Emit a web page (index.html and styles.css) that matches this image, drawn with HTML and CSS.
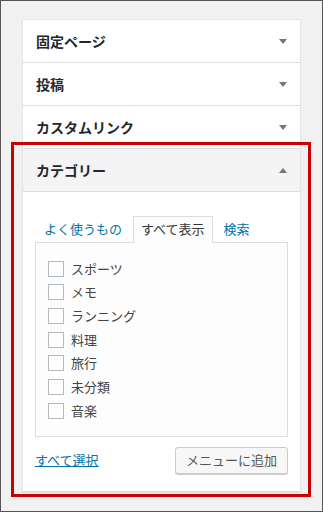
FILE: index.html
```html
<!DOCTYPE html>
<html lang="ja">
<head>
<meta charset="UTF-8">
<meta name="viewport" content="width=device-width, initial-scale=1.0">
<title>メニュー項目を追加</title>
<link rel="stylesheet" href="styles.css">
</head>
<body>
    <div class="frame">
        <div class="panel">
            <div class="section">
                <h3 class="section-title">固定ページ <span class="arrow down"></span></h3>
            </div>
            <div class="section">
                <h3 class="section-title">投稿 <span class="arrow down"></span></h3>
            </div>
            <div class="section">
                <h3 class="section-title">カスタムリンク <span class="arrow down"></span></h3>
            </div>
            <div class="section open">
                <h3 class="section-title">カテゴリー <span class="arrow up"></span></h3>
                <div class="section-body">
                    <ul class="tabs">
                        <li class="tab"><a href="#">よく使うもの</a></li>
                        <li class="tab active"><span>すべて表示</span></li>
                        <li class="tab"><a href="#">検索</a></li>
                    </ul>
                    <ul class="checklist">
                        <li><label><input type="checkbox"> スポーツ</label></li>
                        <li><label><input type="checkbox"> メモ</label></li>
                        <li><label><input type="checkbox"> ランニング</label></li>
                        <li><label><input type="checkbox"> 料理</label></li>
                        <li><label><input type="checkbox"> 旅行</label></li>
                        <li><label><input type="checkbox"> 未分類</label></li>
                        <li><label><input type="checkbox"> 音楽</label></li>
                    </ul>
                    <div class="actions">
                        <a href="#" class="select-all">すべて選択</a>
                        <button class="button">メニューに追加</button>
                    </div>
                </div>
            </div>
        </div>
        <div class="highlight"></div>
    </div>
</body>
</html>
```

FILE: styles.css
```css
*{
    box-sizing: border-box;
}
body{
    margin: 0;
    background-color: #f1f1f1;
    font-family: "Noto Sans CJK JP", "Noto Sans", sans-serif;
    font-size: 13px;
    color: #32373c;
}
.frame{
    position: relative;
    width: 323px;
    height: 512px;
    border: 1px solid #555;
    padding: 18px 21px 0 21px;
}
.panel{
    width: 279px;
    background-color: #fff;
    border: 1px solid #e5e5e5;
    border-bottom: none;
    box-shadow: 0 1px 1px rgba(0, 0, 0, 0.06);
}
.section{
    border-bottom: 1px solid #ddd;
}
.section-title{
    display: flex;
    justify-content: space-between;
    align-items: center;
    height: 42px;
    margin: 0;
    padding: 0 13px 0 13px;
    font-size: 14px;
    font-weight: bold;
    color: #23282d;
    line-height: 20px;
}
.open .section-title{
    background-color: #f4f4f4;
    border-bottom: 1px solid #ddd;
    height: 43px;
}
.arrow{
    width: 0;
    height: 0;
    border-left: 4px solid transparent;
    border-right: 4px solid transparent;
}
.arrow.down{
    border-top: 5px solid #72777c;
}
.arrow.up{
    border-bottom: 5px solid #72777c;
}
.section-body{
    padding: 24px 12px 17px 12px;
}
.tabs{
    display: flex;
    list-style: none;
    margin: 0 0 0 1px;
    padding: 0;
    gap: 3px;
    position: relative;
    z-index: 1;
}
.tab{
    border: 1px solid transparent;
    border-bottom: none;
    padding: 3px 7px 4px 7px;
    line-height: 18px;
}
.tab a{
    color: #0073aa;
    text-decoration: none;
}
.tab.active{
    border-color: #ddd;
    background-color: #fdfdfd;
    margin-bottom: -1px;
    color: #32373c;
}
.checklist{
    list-style: none;
    margin: 0;
    padding: 14px 12px 13px 12px;
    border: 1px solid #ddd;
    background-color: #fdfdfd;
}
.checklist li{
    height: 23.67px;
    display: flex;
    align-items: center;
}
.checklist label{
    display: flex;
    align-items: center;
    line-height: 18px;
    color: #444;
}
.checklist input{
    appearance: none;
    width: 16px;
    height: 16px;
    margin: 0 7px 0 0;
    border: 1px solid #b4b9be;
    background-color: #fff;
}
.actions{
    display: flex;
    justify-content: space-between;
    align-items: center;
    margin-top: 10px;
}
.select-all{
    color: #0073aa;
    text-decoration: underline;
    line-height: 18px;
}
.button{
    font-family: inherit;
    font-size: 13px;
    color: #555;
    background-color: #f7f7f7;
    border: 1px solid #ccc;
    border-radius: 3px;
    box-shadow: 0 1px 0 #ccc;
    height: 27px;
    width: 113px;
    padding: 0 10px;
    line-height: 18px;
}
.highlight{
    position: absolute;
    left: 10px;
    top: 141px;
    width: 300px;
    height: 355px;
    border: 3px solid #c00;
    pointer-events: none;
}
```
